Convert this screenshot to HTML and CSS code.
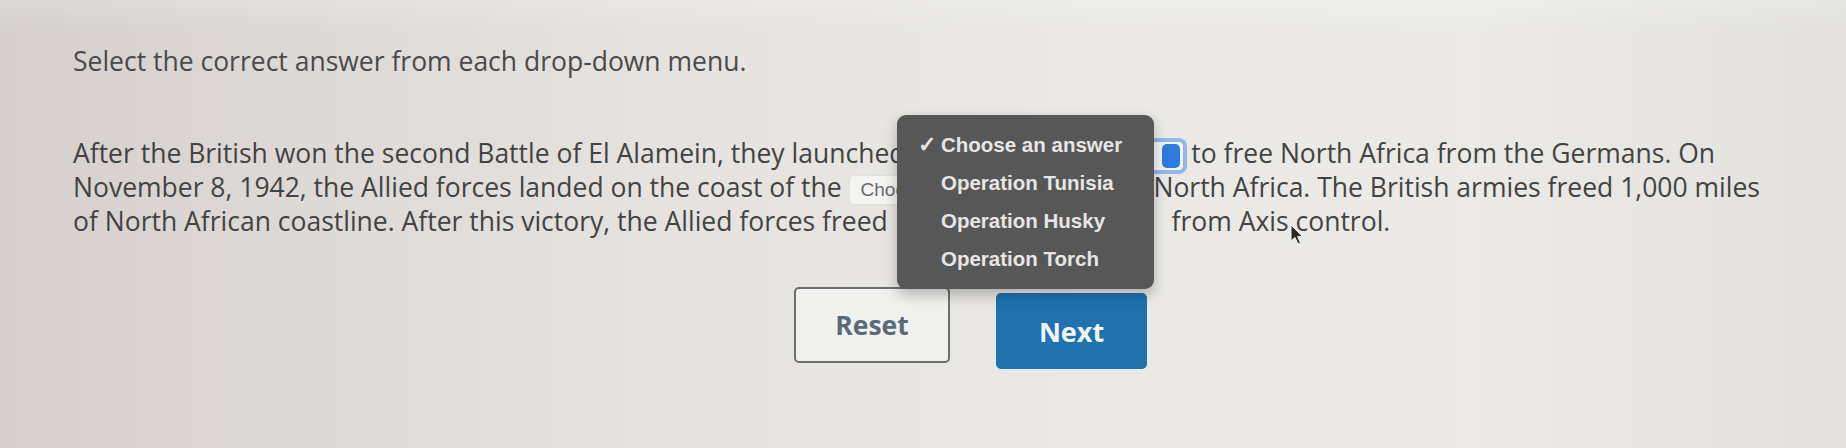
FILE: index.html
```html
<!DOCTYPE html>
<html lang="en">
<head>
<meta charset="utf-8">
<title>Drop-down question</title>
<link rel="stylesheet" href="styles.css">
</head>
<body>
<div class="page">
  <p class="prompt">Select the correct answer from each drop-down menu.</p>
  <p class="passage">After the British won the second Battle of El Alamein, they launched <span class="select select-first is-focused"><span class="select-label">Choose an answer</span><span class="select-arrow"></span></span> to free North Africa from the Germans. On<br>November 8, 1942, the Allied forces landed on the coast of the <span class="select select-second"><span class="select-label">Choose an answer</span><span class="select-arrow"></span></span> North Africa. The British armies freed 1,000 miles<br>of North African coastline. After this victory, the Allied forces freed <span class="select select-third"><span class="select-label">Choose an answer</span><span class="select-arrow"></span></span> from Axis control.</p>
  <div class="actions">
    <button class="btn btn-reset" type="button">Reset</button>
    <button class="btn btn-next" type="button">Next</button>
  </div>
  <ul class="popup">
    <li class="popup-item is-checked"><span class="check">✓</span>Choose an answer</li>
    <li class="popup-item">Operation Tunisia</li>
    <li class="popup-item">Operation Husky</li>
    <li class="popup-item">Operation Torch</li>
  </ul>
  <svg class="cursor" width="14" height="22" viewBox="0 0 14 22" aria-hidden="true">
    <path d="M1 1 L1 17 L5 13.5 L8 20 L10.5 19 L7.6 12.6 L12.5 12.6 Z" fill="#2a2a2a" stroke="#f4f4f4" stroke-width="1"/>
  </svg>
</div>
</body>
</html>
```

FILE: styles.css
```css
html, body {
  margin: 0;
  height: 100%;
}

body {
  background:
    linear-gradient(180deg, rgba(255, 255, 255, 0.18) 0, rgba(255, 255, 255, 0) 30px),
    linear-gradient(90deg, #d5cfcd 0%, #dcd7d5 12%, #e5e2df 35%, #eae9e6 60%, #ebeae7 80%, #e2e1dd 100%);
  font-family: "Open Sans", "DejaVu Sans", sans-serif;
  color: #444;
  overflow: hidden;
}

.page {
  position: relative;
  padding: 44px 0 0 73px;
  height: 448px;
  box-sizing: border-box;
}

.prompt {
  margin: 0;
  font-size: 26.5px;
  line-height: 34px;
  color: #4a4a4a;
}

.passage {
  margin: 58px 0 0 0;
  font-size: 26.5px;
  line-height: 34px;
  white-space: nowrap;
  color: #434343;
}

.select {
  display: inline-flex;
  align-items: center;
  justify-content: space-between;
  box-sizing: border-box;
  width: 280px;
  height: 30px;
  margin: -6px 0;
  padding: 0 3px 0 11px;
  vertical-align: middle;
  background: #f4f4f3;
  border: 1px solid #e0e0de;
  border-radius: 5px;
  font-family: "Liberation Sans", Arial, sans-serif;
  font-size: 19px;
  color: #6a6a6a;
}

.select-first {
  width: 272px;
}

.select-second {
  width: 298px;
}

.select-third {
  width: 270px;
  background: transparent;
  border-color: transparent;
}

.select-label {
  line-height: 1;
}

.select-arrow {
  width: 18px;
  height: 24px;
  border-radius: 5px;
}

.select.is-focused {
  border-color: #8fb4ea;
  box-shadow: 0 0 0 3px rgba(70, 135, 225, 0.5);
}

.select.is-focused .select-arrow {
  background: #2f7be0;
}

.actions {
  display: flex;
  gap: 46px;
  margin: 49px 0 0 721px;
}

.btn {
  box-sizing: border-box;
  width: 156px;
  height: 76px;
  border-radius: 5px;
  font-family: "Open Sans", "DejaVu Sans", sans-serif;
  font-size: 26.5px;
  font-weight: 700;
  cursor: pointer;
}

.btn-reset {
  background: #f1f1ef;
  border: 2px solid #6e6e6e;
  color: #5b6a77;
}

.btn-next {
  margin-top: 6px;
  width: 151px;
  background: #1f72ae;
  border: none;
  color: #f2f6f8;
  font-size: 27px;
}

.popup {
  position: absolute;
  left: 897px;
  top: 115px;
  width: 257px;
  margin: 0;
  padding: 11px 0 11px;
  list-style: none;
  box-sizing: border-box;
  background: #575757;
  border-radius: 9px;
  box-shadow: 0 6px 14px rgba(0, 0, 0, 0.25);
  font-family: "Liberation Sans", Arial, sans-serif;
  font-size: 20.5px;
  font-weight: 700;
  color: #e6e6e6;
}

.popup-item {
  position: relative;
  height: 38px;
  line-height: 38px;
  padding-left: 44px;
  white-space: nowrap;
}

.check {
  position: absolute;
  left: 21px;
  font-size: 22px;
}

.cursor {
  position: absolute;
  left: 1290px;
  top: 224px;
}
```
